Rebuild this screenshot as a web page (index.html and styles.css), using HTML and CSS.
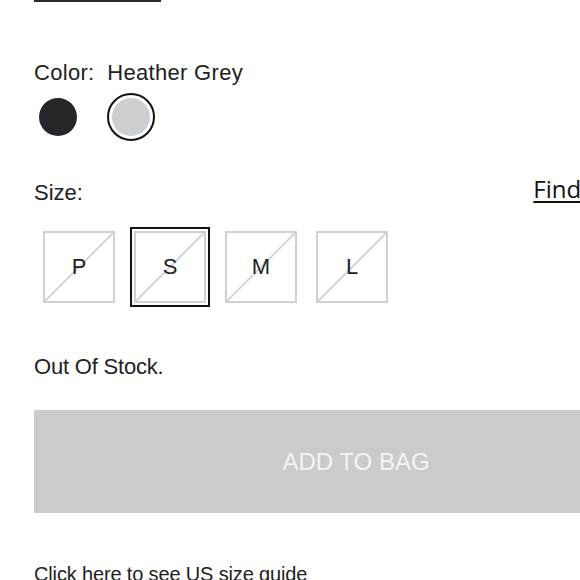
FILE: index.html
```html
<!DOCTYPE html>
<html>
<head>
<meta charset="utf-8">
<link rel="stylesheet" href="styles.css">
</head>
<body>
<div class="page">
  <div class="top-rule"></div>
  <div class="label color-label">Color:&nbsp; Heather Grey</div>
  <div class="swatches">
    <span class="swatch swatch-black"></span>
    <span class="swatch swatch-grey selected"></span>
  </div>
  <div class="size-head">
    <span class="label">Size:</span>
    <a class="find-link">Find Your Size</a>
  </div>
  <div class="sizes">
    <span class="size">P</span>
    <span class="size selected">S</span>
    <span class="size">M</span>
    <span class="size">L</span>
  </div>
  <div class="label stock">Out Of Stock.</div>
  <div class="add-btn">ADD TO BAG</div>
  <div class="guide">Click here to see US size guide</div>
</div>
</body>
</html>
```
FILE: styles.css
```css
html, body {
  margin: 0;
  padding: 0;
  overflow: hidden;
  background: #fff;
}
.page {
  width: 644px;
  padding-left: 34px;
  font-family: "Liberation Sans", Arial, sans-serif;
  color: #222;
}
.top-rule {
  width: 127px;
  height: 2px;
  background: #2b2b2b;
}
.label {
  font-size: 22px;
  line-height: 26px;
}
.color-label {
  margin-top: 58px;
  letter-spacing: 0.3px;
}
.swatches {
  display: flex;
  gap: 35px;
  padding-left: 5px;
  margin-top: 12px;
  height: 38px;
}
.swatch {
  width: 38px;
  height: 38px;
  border-radius: 50%;
  display: block;
}
.swatch-black { background: #28252a; }
.swatch-grey { background: #cdd0d3; }
.swatch.selected {
  outline: 2px solid #111;
  outline-offset: 3px;
}
.size-head {
  margin-top: 44px;
  display: flex;
  justify-content: space-between;
  align-items: flex-start;
  height: 26px;
}
.find-link {
  font-family: "Open Sans", sans-serif;
  font-size: 24px;
  line-height: 26px;
  color: #111;
  text-decoration: underline;
  text-underline-offset: 3px;
  margin-top: -4px;
  margin-right: -12px;
}
.sizes {
  display: flex;
  gap: 19px;
  padding-left: 9px;
  margin-top: 25px;
}
.size {
  box-sizing: border-box;
  width: 72px;
  height: 72px;
  border: 2px solid #d0d0d0;
  display: flex;
  align-items: center;
  justify-content: center;
  font-size: 22px;
  color: #222;
  background: linear-gradient(to bottom right, transparent calc(50% - 1px), #d8d8d8 calc(50% - 1px), #d8d8d8 calc(50% + 1px), transparent calc(50% + 1px));
}
.size.selected {
  outline: 2px solid #111;
  outline-offset: 2px;
}
.stock {
  margin-top: 51px;
  letter-spacing: -0.2px;
}
.add-btn {
  margin-top: 30px;
  height: 103px;
  background: #cbcbcb;
  color: #f4f4f4;
  font-size: 24px;
  display: flex;
  align-items: center;
  justify-content: center;
}
.guide {
  margin-top: 49px;
  font-size: 20px;
  line-height: 24px;
  letter-spacing: -0.15px;
}
```
